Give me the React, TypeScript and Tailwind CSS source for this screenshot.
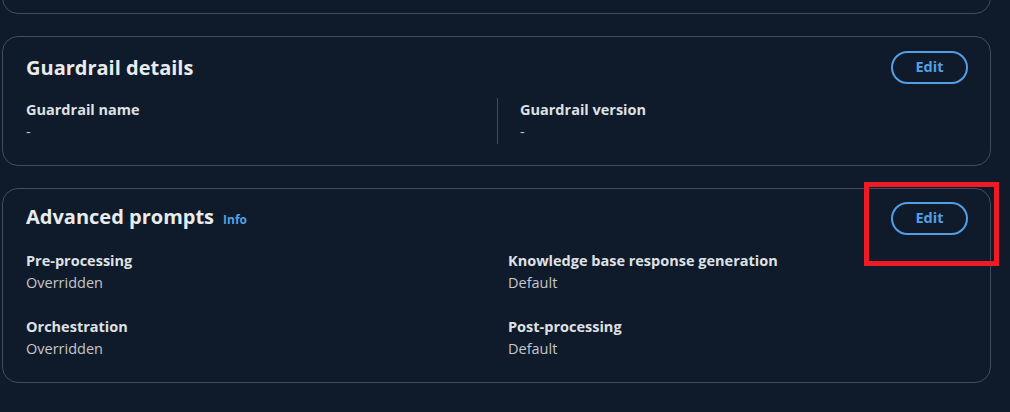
const font = { fontFamily: '"Open Sans", "Noto Sans", Arial, sans-serif' };

function EditButton() {
  return (
    <button className="h-[33px] w-[77px] shrink-0 rounded-full border-2 border-[#539fe5] text-[14.5px] font-bold leading-none text-[#539fe5]">
      Edit
    </button>
  );
}

function Field({ label, value }: { label: string; value: string }) {
  return (
    <div>
      <div className="text-[14.5px] font-bold leading-5 text-[#dfe1e5]">{label}</div>
      <div className="mt-0.5 text-[14.5px] leading-5 text-[#c6c6cd]">{value}</div>
    </div>
  );
}

export default function App() {
  return (
    <div className="relative h-[412px] w-full overflow-hidden bg-[#0f1b2a]" style={font}>
      <div className="flex flex-col gap-[22px] pl-[2px] pr-[19px]">
        <div className="-mt-[20px] h-[34px] rounded-2xl border border-[#414d5c]" />

        <section className="rounded-2xl border border-[#414d5c] pb-[21px] pl-[23px] pr-[22px] pt-[14px]">
          <div className="flex items-center justify-between">
            <h2 className="text-[20px] font-bold leading-6 text-[#e9ebed]">Guardrail details</h2>
            <EditButton />
          </div>
          <div className="mt-[14px] grid grid-cols-2">
            <div className="py-0.5">
              <Field label="Guardrail name" value="-" />
            </div>
            <div className="border-l border-[#414d5c] py-0.5 pl-[22px]">
              <Field label="Guardrail version" value="-" />
            </div>
          </div>
        </section>

        <section className="rounded-2xl border border-[#414d5c] pb-[23px] pl-[23px] pr-[22px] pt-[13px]">
          <div className="flex items-center justify-between">
            <h2 className="flex items-baseline text-[20px] font-bold leading-6 text-[#e9ebed]">
              Advanced prompts
              <a className="ml-[9px] text-[12px] font-bold text-[#539fe5]">Info</a>
            </h2>
            <EditButton />
          </div>
          <div className="mt-4 grid grid-cols-2 gap-x-[22px] gap-y-6">
            <Field label="Pre-processing" value="Overridden" />
            <Field label="Knowledge base response generation" value="Default" />
            <Field label="Orchestration" value="Overridden" />
            <Field label="Post-processing" value="Default" />
          </div>
        </section>
      </div>

      <div className="absolute left-[864px] top-[182px] h-[84px] w-[135px] border-[5px] border-[#ed1c24]" />
    </div>
  );
}
